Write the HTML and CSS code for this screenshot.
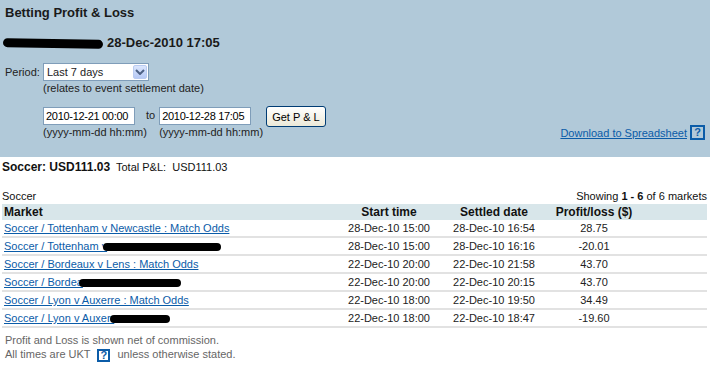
FILE: index.html
```html
<!DOCTYPE html>
<html lang="en">
<head>
    <meta charset="UTF-8">
    <title>Betting Profit &amp; Loss</title>
    <link rel="stylesheet" href="styles.css">
</head>
<body>
    <div class="panel">
        <h1>Betting Profit &amp; Loss</h1>
        <div class="user"><span class="scribble name-scribble"></span> 28-Dec-2010 17:05</div>

        <div class="period">
            <span class="period-label">Period:</span>
            <div class="select-box">
                <span>Last 7 days</span>
                <span class="select-arrow">
                    <svg width="10" height="6" viewBox="0 0 10 6"><path d="M1 1 L5 5 L9 1" fill="none" stroke="#4d6185" stroke-width="2"/></svg>
                </span>
            </div>
        </div>
        <div class="hint indent">(relates to event settlement date)</div>

        <div class="range">
            <div class="range-fields">
                <div class="field">
                    <div class="date-input">2010-12-21 00:00</div>
                    <div class="hint">(yyyy-mm-dd hh:mm)</div>
                </div>
                <span class="to">to</span>
                <div class="field">
                    <div class="date-input">2010-12-28 17:05</div>
                    <div class="hint">(yyyy-mm-dd hh:mm)</div>
                </div>
                <button class="get-btn">Get P &amp; L</button>
            </div>
            <div class="download">
                <a href="#">Download to Spreadsheet </a>
                <span class="help">?</span>
            </div>
        </div>
    </div>

    <div class="totals"><b>Soccer: USD111.03</b>&nbsp; Total P&amp;L:&nbsp; USD111.03</div>

    <div class="results">
        <div class="results-top">
            <span>Soccer</span>
            <span>Showing <b>1 - 6</b> of 6 markets</span>
        </div>
        <table class="markets">
            <thead>
                <tr>
                    <th class="col-market">Market</th>
                    <th class="col-start">Start time</th>
                    <th class="col-settled">Settled date</th>
                    <th class="col-pl">Profit/loss ($)</th>
                    <th class="col-rest"></th>
                </tr>
            </thead>
            <tbody>
                <tr>
                    <td><a href="#">Soccer / Tottenham v Newcastle : Match Odds</a></td>
                    <td>28-Dec-10 15:00</td>
                    <td>28-Dec-10 16:54</td>
                    <td>28.75</td>
                    <td></td>
                </tr>
                <tr>
                    <td><a href="#">Soccer / Tottenham v</a><span class="scribble row-scribble" style="width: 118px"></span></td>
                    <td>28-Dec-10 15:00</td>
                    <td>28-Dec-10 16:16</td>
                    <td>-20.01</td>
                    <td></td>
                </tr>
                <tr>
                    <td><a href="#">Soccer / Bordeaux v Lens : Match Odds</a></td>
                    <td>22-Dec-10 20:00</td>
                    <td>22-Dec-10 21:58</td>
                    <td>43.70</td>
                    <td></td>
                </tr>
                <tr>
                    <td><a href="#">Soccer / Bordea</a><span class="scribble row-scribble" style="width: 102px"></span></td>
                    <td>22-Dec-10 20:00</td>
                    <td>22-Dec-10 20:15</td>
                    <td>43.70</td>
                    <td></td>
                </tr>
                <tr>
                    <td><a href="#">Soccer / Lyon v Auxerre : Match Odds</a></td>
                    <td>22-Dec-10 18:00</td>
                    <td>22-Dec-10 19:50</td>
                    <td>34.49</td>
                    <td></td>
                </tr>
                <tr>
                    <td><a href="#">Soccer / Lyon v Auxerr</a><span class="scribble row-scribble" style="width: 60px"></span></td>
                    <td>22-Dec-10 18:00</td>
                    <td>22-Dec-10 18:47</td>
                    <td>-19.60</td>
                    <td></td>
                </tr>
            </tbody>
        </table>

        <div class="notes">
            <div>Profit and Loss is shown net of commission.</div>
            <div>All times are UKT <span class="help">?</span> unless otherwise stated.</div>
        </div>
    </div>
</body>
</html>
```

FILE: styles.css
```css
body {
    margin: 0;
    font-family: "Liberation Sans", Arial, sans-serif;
    font-size: 11px;
    color: #222;
    background-color: #ffffff;
}
a {
    color: #0b5ca8;
}

/* Top filter panel */
.panel {
    background-color: #b1c9d9;
    padding: 5px 5px 18px 5px;
}
.panel h1 {
    margin: 0;
    font-size: 13px;
    line-height: 16px;
    color: #1a1a1a;
}
.user {
    margin-top: 14px;
    font-size: 13px;
    font-weight: bold;
    line-height: 16px;
    color: #1a1a1a;
    display: flex;
    align-items: center;
    gap: 4px;
}
.scribble {
    display: inline-block;
    background-color: #000;
    border-radius: 6px;
}
.name-scribble {
    width: 100px;
    height: 9px;
    margin-left: -2px;
    transform: rotate(1deg);
}
.period {
    margin-top: 12px;
    display: flex;
    align-items: center;
    height: 18px;
}
.period-label {
    width: 38px;
}
.select-box {
    width: 101px;
    height: 16px;
    background-color: #fff;
    border: 1px solid #7f9db9;
    display: flex;
    align-items: center;
    justify-content: space-between;
    padding-left: 3px;
}
.select-arrow {
    width: 14px;
    height: 14px;
    margin-right: 1px;
    background: linear-gradient(#dbe6fd, #b6c9f5);
    border: 1px solid #b9cbf1;
    border-radius: 2px;
    box-sizing: border-box;
    display: flex;
    align-items: center;
    justify-content: center;
}
.hint {
    line-height: 14px;
    color: #222;
    white-space: nowrap;
}
.indent {
    margin-left: 38px;
}
.range {
    margin-top: 12px;
    display: flex;
    justify-content: space-between;
    align-items: flex-end;
}
.range-fields {
    display: flex;
    align-items: flex-start;
    margin-left: 38px;
}
.field {
    width: 98px;
}
.date-input {
    box-sizing: border-box;
    width: 92px;
    height: 18px;
    line-height: 16px;
    padding-left: 2px;
    border: 1px solid #7f9db9;
    background-color: #fff;
    white-space: nowrap;
    overflow: hidden;
    letter-spacing: -0.3px;
    color: #000;
}
.to {
    margin: 2px 4px 0 5px;
}
.get-btn {
    margin-left: 9px;
    margin-top: -1px;
    height: 21px;
    padding: 0 5px;
    font-family: "Liberation Sans", Arial, sans-serif;
    font-size: 11px;
    color: #000;
    background: linear-gradient(#ffffff, #ece9d8);
    border: 1px solid #003c74;
    border-radius: 3px;
}
.download {
    display: flex;
    align-items: center;
    gap: 3px;
    margin-bottom: -1px;
}
.help {
    display: inline-block;
    width: 11px;
    height: 11px;
    line-height: 11px;
    text-align: center;
    border: 2px solid #0b5ca8;
    color: #0b5ca8;
    font-weight: bold;
    font-size: 11px;
    vertical-align: middle;
}

/* Totals + results */
.totals {
    padding: 3px 2px 0 2px;
    line-height: 14px;
    color: #111;
}
.totals b {
    font-size: 12px;
}
.results {
    padding: 0 3px 0 2px;
}
.results-top {
    margin-top: 15px;
    display: flex;
    justify-content: space-between;
    line-height: 14px;
    color: #111;
}
.markets {
    width: 100%;
    border-collapse: collapse;
    margin-top: 1px;
}
.markets th {
    background-color: #d8e6ea;
    height: 16px;
    padding: 0;
    font-size: 12px;
    color: #111;
    text-align: center;
}
.markets th.col-market {
    text-align: left;
    padding-left: 2px;
}
.col-start {
    width: 102px;
}
.col-settled {
    width: 108px;
}
.col-pl {
    width: 92px;
}
.col-rest {
    width: 67px;
}
.markets td {
    height: 16px;
    padding: 0;
    border-bottom: 2px solid #e2e2e2;
    text-align: center;
    color: #222;
    white-space: nowrap;
}
.markets td:first-child {
    text-align: left;
    padding-left: 2px;
}
.row-scribble {
    height: 8px;
    vertical-align: middle;
    margin-left: -4px;
}
.notes {
    margin-top: 5px;
    padding-left: 3px;
    line-height: 14px;
    color: #666;
}
.notes .help {
    width: 9px;
    height: 9px;
    line-height: 9px;
    margin: 0 4px;
}
```
